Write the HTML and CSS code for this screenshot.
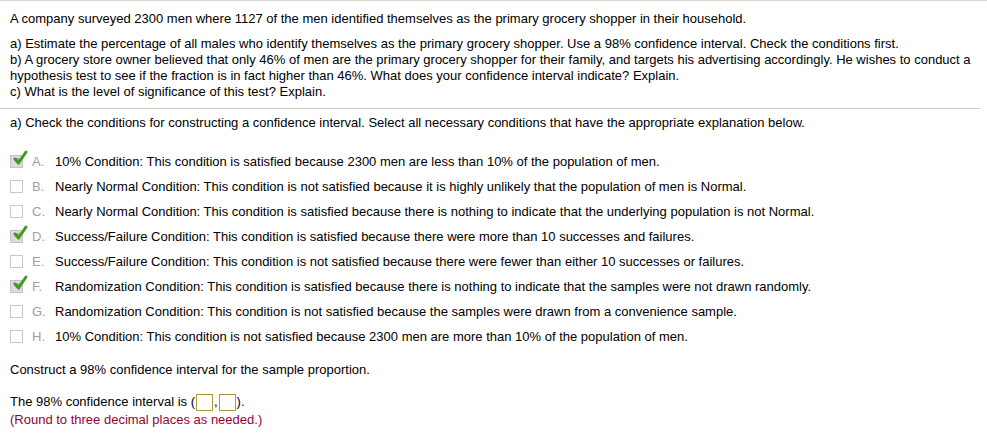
FILE: index.html
```html
<!DOCTYPE html>
<html>
<head>
<meta charset="utf-8">
<link rel="stylesheet" href="styles.css">
</head>
<body>
<div class="page">
  <div class="question">
    <p class="intro">A company surveyed 2300 men where 1127 of the men identified themselves as the primary grocery shopper in their household.</p>
    <p class="parts">a) Estimate the percentage of all males who identify themselves as the primary grocery shopper. Use a 98% confidence interval. Check the conditions first.<br>b) A grocery store owner believed that only 46% of men are the primary grocery shopper for their family, and targets his advertising accordingly. He wishes to conduct a hypothesis test to see if the fraction is in fact higher than 46%. What does your confidence interval indicate? Explain.<br>c) What is the level of significance of this test? Explain.</p>
  </div>
  <div class="answer">
    <p class="prompt">a) Check the conditions for constructing a confidence interval. Select all necessary conditions that have the appropriate explanation below.</p>
    <ul class="options">
      <li class="opt"><span class="box"><svg width="22" height="20" viewBox="0 0 22 20"><rect x="0.5" y="7.5" width="12" height="12" fill="#dcdcdc" stroke="#c4c4c4"/><path d="M3 10h7v7z" fill="#a8a8a8"/><path d="M5 11 L8.5 15 L16 4" fill="none" stroke="#3f9c1c" stroke-width="3" stroke-linecap="round" stroke-linejoin="round"/></svg></span><span class="letter">A.</span><span class="txt">10% Condition: This condition is satisfied because 2300 men are less than 10% of the population of men.</span></li>
      <li class="opt"><span class="box"><span class="empty"></span></span><span class="letter">B.</span><span class="txt">Nearly Normal Condition: This condition is not satisfied because it is highly unlikely that the population of men is Normal.</span></li>
      <li class="opt"><span class="box"><span class="empty"></span></span><span class="letter">C.</span><span class="txt">Nearly Normal Condition: This condition is satisfied because there is nothing to indicate that the underlying population is not Normal.</span></li>
      <li class="opt"><span class="box"><svg width="22" height="20" viewBox="0 0 22 20"><rect x="0.5" y="7.5" width="12" height="12" fill="#dcdcdc" stroke="#c4c4c4"/><path d="M3 10h7v7z" fill="#a8a8a8"/><path d="M5 11 L8.5 15 L16 4" fill="none" stroke="#3f9c1c" stroke-width="3" stroke-linecap="round" stroke-linejoin="round"/></svg></span><span class="letter">D.</span><span class="txt">Success/Failure Condition: This condition is satisfied because there were more than 10 successes and failures.</span></li>
      <li class="opt"><span class="box"><span class="empty"></span></span><span class="letter">E.</span><span class="txt">Success/Failure Condition: This condition is not satisfied because there were fewer than either 10 successes or failures.</span></li>
      <li class="opt"><span class="box"><svg width="22" height="20" viewBox="0 0 22 20"><rect x="0.5" y="7.5" width="12" height="12" fill="#dcdcdc" stroke="#c4c4c4"/><path d="M3 10h7v7z" fill="#a8a8a8"/><path d="M5 11 L8.5 15 L16 4" fill="none" stroke="#3f9c1c" stroke-width="3" stroke-linecap="round" stroke-linejoin="round"/></svg></span><span class="letter">F.</span><span class="txt">Randomization Condition: This condition is satisfied because there is nothing to indicate that the samples were not drawn randomly.</span></li>
      <li class="opt"><span class="box"><span class="empty"></span></span><span class="letter">G.</span><span class="txt">Randomization Condition: This condition is not satisfied because the samples were drawn from a convenience sample.</span></li>
      <li class="opt"><span class="box"><span class="empty"></span></span><span class="letter">H.</span><span class="txt">10% Condition: This condition is not satisfied because 2300 men are more than 10% of the population of men.</span></li>
    </ul>
    <p class="construct">Construct a 98% confidence interval for the sample proportion.</p>
    <p class="interval">The 98% confidence interval is (<span class="inbox"></span>,<span class="inbox"></span>).</p>
    <p class="hint">(Round to three decimal places as needed.)</p>
  </div>
</div>
</body>
</html>
```

FILE: styles.css
```css
html, body {
  margin: 0;
  padding: 0;
  background: #ffffff;
}
body {
  font-family: "Liberation Sans", Arial, sans-serif;
  font-size: 13px;
  color: #000;
}
p { margin: 0; }
.page {
  border-top: 1px solid #d8d4cc;
}
.question {
  padding: 10px 2px 8px 10px;
  border-bottom: 1px solid #cfcbc3;
  margin-right: 7px;
}
.intro {
  line-height: 16px;
  margin-bottom: 9px;
}
.parts {
  line-height: 16px;
}
.answer {
  padding: 6px 10px 0 10px;
}
.prompt {
  line-height: 16px;
  margin-bottom: 18px;
}
.options {
  list-style: none;
  margin: 0;
  padding: 0;
}
.opt {
  display: flex;
  align-items: center;
  height: 25px;
}
.box {
  display: block;
  width: 22px;
  height: 13px;
  margin-top: -1px;
}
.box svg {
  display: block;
  margin-top: -7px;
}
.empty {
  display: block;
  width: 11px;
  height: 11px;
  border: 1px solid #c8c8c8;
  background: #fff;
}
.letter {
  color: #a0a0a0;
  width: 23px;
}
.construct {
  margin-top: 13px;
  line-height: 16px;
}
.interval {
  margin-top: 15px;
  line-height: 18px;
  display: flex;
  align-items: center;
}
.inbox {
  display: inline-block;
  width: 15px;
  height: 15px;
  border: 1px solid #b29a3c;
  margin: 0 1px;
}
.hint {
  color: #990033;
  line-height: 16px;
  margin-top: 1px;
}
```
